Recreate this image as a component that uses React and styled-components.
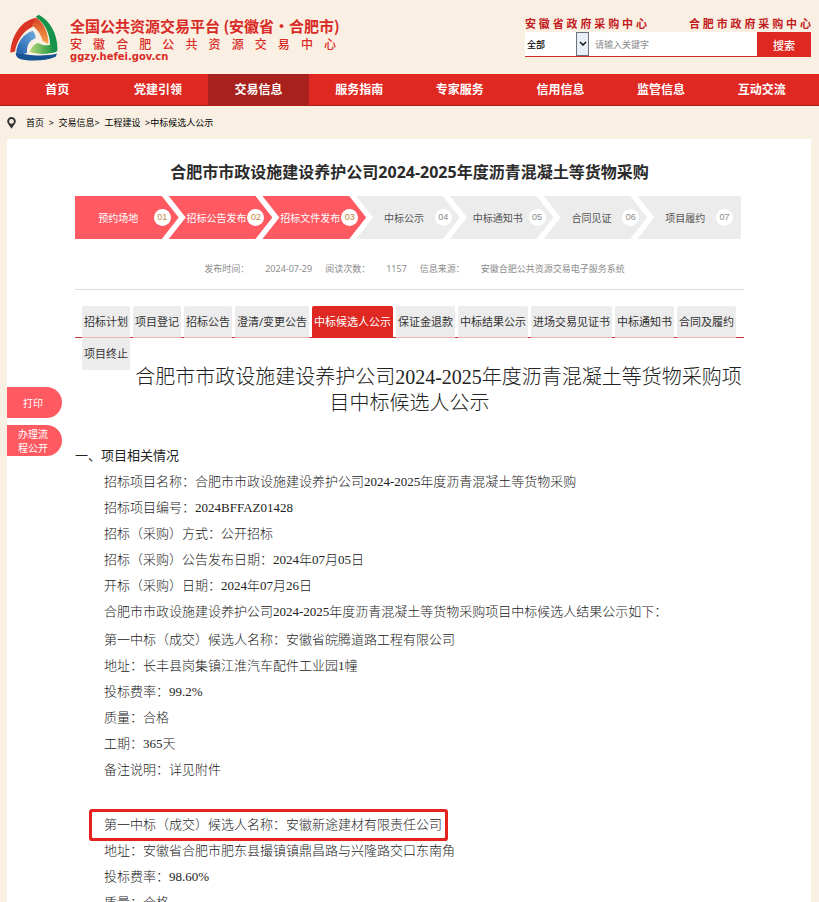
import React from "react";
import styled, { createGlobalStyle, css } from "styled-components";

const GlobalStyle = createGlobalStyle`
  * { box-sizing: border-box; }
  body {
    margin: 0;
    background: #f9f0e3;
    color: #333;
    font-family: "Noto Sans", "Noto Sans CJK SC", sans-serif;
    font-size: 12px;
  }
  h1, h2, h3, p, ul, ol, dl, dd { margin: 0; padding: 0; }
  ul, ol { list-style: none; }
  a { color: inherit; text-decoration: none; }
  button, input, select { font-family: inherit; margin: 0; }
`;

const Page = styled.div`
  height: 100vh;
  overflow: hidden;
  display: flex;
  flex-direction: column;
`;

const Header = styled.header`
  flex: none;
  height: 74px;
  padding: 14px 8px 0 10px;
  display: flex;
  justify-content: space-between;
  align-items: flex-start;
`;

const Brand = styled.a`
  display: flex;
  gap: 12px;
  color: #d92b26;
`;

const BrandText = styled.div`
  width: 266px;
  padding-top: 2px;
`;

const BrandName = styled.div`
  font: 700 15px/20px "Noto Sans CJK SC", sans-serif;
  white-space: nowrap;
`;

const BrandSub = styled.div`
  font: 500 12px/15px "Noto Sans CJK SC", sans-serif;
  text-align: justify;
  text-align-last: justify;
`;

const BrandUrl = styled.div`
  font: 700 10px/11px "DejaVu Sans", sans-serif;
`;

const Tools = styled.div`
  width: 286px;
  margin-top: 1px;
`;

const Centers = styled.div`
  display: flex;
  justify-content: space-between;
  height: 17px;
`;

const CenterLink = styled.a`
  width: 122px;
  color: #c4191c;
  font: 700 11px/17px "STXingkai", "KaiTi", "Noto Sans CJK SC", serif;
  text-align: justify;
  text-align-last: justify;
`;

const Search = styled.form`
  display: flex;
  height: 25px;
`;

const SelectWrap = styled.div`
  position: relative;
  flex: none;
  width: 64px;
  border-bottom: 1px solid #cf2b2b;
  background: #fff;
`;

const ScopeSelect = styled.select`
  appearance: none;
  width: 100%;
  height: 100%;
  padding: 0 0 0 2px;
  border: 0;
  background: transparent;
  color: #000;
  font-size: 9px;
  font-weight: 500;
`;

const SelectArrow = styled.span`
  position: absolute;
  top: 0;
  right: 0;
  bottom: 0;
  width: 13px;
  display: flex;
  align-items: center;
  justify-content: center;
  border: 1px solid #6a7580;
  background: #e9eff5;
  pointer-events: none;
`;

const SearchInput = styled.input`
  flex: 1;
  min-width: 0;
  padding: 0 6px;
  border: 0;
  border-bottom: 1px solid #cf2b2b;
  background: #fff;
  font-size: 9px;
  &::placeholder { color: #8a8a8a; }
`;

const SearchButton = styled.button`
  flex: none;
  width: 54px;
  padding: 0;
  border: 0;
  background: #e02822;
  color: #fff;
  font-size: 11px;
  font-weight: 500;
`;

const Nav = styled.nav`
  flex: none;
  display: flex;
  height: 32px;
  padding: 0 7px;
  background: #e02822;
  border-bottom: 1px solid #ae1d1b;
`;

const NavItem = styled.a`
  flex: 1;
  text-align: center;
  color: #fff;
  font-weight: 700;
  font-size: 12px;
  line-height: 31px;
  background: ${(p) => (p.$active ? "#a9211c" : "transparent")};
`;

const Crumbs = styled.nav`
  flex: none;
  display: flex;
  align-items: center;
  gap: 10px;
  height: 33px;
  padding: 0 7px;
  color: #000;
  font-size: 9px;
  white-space: pre;
`;

const Panel = styled.main`
  position: relative;
  flex: 1 0 auto;
  margin: 0 8px 0 7px;
  padding: 20px 67px 0 68px;
  background: #fff;
`;

const Title = styled.h1`
  color: #2b2b2b;
  font-size: 16px;
  font-weight: 700;
  line-height: 26px;
  text-align: center;
`;

const Steps = styled.ol`
  display: grid;
  grid-template-columns: repeat(7, minmax(0, 1fr));
  margin: 11px 3px 0 0;
  padding-right: 10px;
`;

const arrow = "calc(100% - 17px) 0, 100% 50%, calc(100% - 17px) 100%";

const Step = styled.li`
  height: 43px;
  margin-right: -10px;
  padding: 0 8px 0 17px;
  display: flex;
  align-items: center;
  font-size: 10px;
  white-space: nowrap;
  color: ${(p) => (p.$done ? "#fff" : "#555")};
  background: ${(p) => (p.$done ? "#ff5962" : "#ececec")};
  clip-path: polygon(0 0, ${arrow}, 0 100%, 17px 50%);
  &:first-child {
    padding-left: 8px;
    clip-path: polygon(0 0, ${arrow}, 0 100%);
  }
  &:last-child {
    clip-path: polygon(0 0, 100% 0, 100% 100%, 0 100%, 17px 50%);
  }
`;

const StepName = styled.span`
  flex: 1;
  text-align: center;
`;

const StepNumber = styled.span`
  flex: none;
  width: 17px;
  height: 17px;
  border-radius: 50%;
  background: #fff;
  color: ${(p) => (p.$done ? "#c08a45" : "#8a8a8a")};
  font: 9px/17px "Liberation Sans", sans-serif;
  text-align: center;
`;

const Meta = styled.dl`
  display: flex;
  justify-content: center;
  gap: 13px;
  height: 51px;
  padding: 20px 0 0 10px;
  border-bottom: 1px solid #ddd;
  color: #8c8c8c;
  font-size: 9px;
  line-height: 20px;
`;

const MetaItem = styled.div`
  display: flex;
  gap: 16px;
`;

const Tabs = styled.ul`
  display: flex;
  flex-wrap: wrap;
  align-content: flex-start;
  gap: 0 3px;
  height: 32px;
  margin-top: 16px;
  padding-left: 7px;
  border-bottom: 1px solid #c2383b;
`;

const Tab = styled.a`
  display: block;
  height: 32px;
  padding: 0 2px;
  border-radius: 2px 2px 0 0;
  border-bottom: 1px solid #f0b4b4;
  background: #ececec;
  color: #333;
  font-size: 11px;
  line-height: 31px;
  ${(p) => p.$active && css`
    background: #e02822;
    border-color: #e02822;
    color: #fff;
  `}
  ${(p) => p.$wrapped && css`
    border-color: #ececec;
  `}
`;

const Article = styled.article`
  padding-top: 26px;
  color: #222;
  font-family: "Liberation Serif", "Noto Sans CJK SC", serif;
  font-weight: 300;
`;

const ArticleTitle = styled.h2`
  font-size: 20px;
  font-weight: 300;
  line-height: 26px;
  text-align: center;
  /* keeps the first line clear of the wrapped tab */
  &::before {
    content: "";
    float: left;
    width: 58px;
    height: 8px;
  }
`;

const SectionTitle = styled.h3`
  margin: 26px 0 1px;
  font: 400 13px/26px "Noto Sans", "Noto Sans CJK SC", sans-serif;
`;

const Lines = styled.div`
  padding-left: 29px;
  font-size: 13px;
  line-height: 26px;
  margin-bottom: ${(p) => (p.$spaced ? 29 : 2)}px;
`;

const Highlight = styled.p`
  width: fit-content;
  margin-left: -12px;
  padding: 0 3px 0 12px;
  border-radius: 1px;
  box-shadow: 0 0 0 3px #e4231f;
`;

const SideActions = styled.aside`
  position: absolute;
  left: 0;
  top: 248px;
  display: grid;
  gap: 7px;
`;

const SideButton = styled.button`
  width: 55px;
  height: 31px;
  padding: 0 12px 0 9px;
  border: 0;
  border-radius: 0 16px 16px 0;
  background: #ff5962;
  color: #fff;
  font-size: 10px;
  line-height: 14px;
`;

function Logo() {
  return (
    <svg width="48" height="48" viewBox="14 18 146 142" aria-hidden="true">
      <defs>
        <linearGradient id="warm" x1="0" y1="0" x2="0" y2="1">
          <stop offset="0" stopColor="#d94724" />
          <stop offset="1" stopColor="#f3a54f" />
        </linearGradient>
        <linearGradient id="cool" x1="1" y1="0" x2="0" y2="1">
          <stop offset="0" stopColor="#72aee0" />
          <stop offset="1" stopColor="#1b5caa" />
        </linearGradient>
        <linearGradient id="leaf" x1="0" y1="0" x2="1" y2="0">
          <stop offset="0" stopColor="#b8d879" />
          <stop offset="1" stopColor="#239944" />
        </linearGradient>
      </defs>
      <path fill="#db3425" d="M94 28C55 31 19 75 15 134L29 130C34 98 55 66 85 53L101 33Z" />
      <path fill="url(#warm)" d="M80 50L96 29C118 46 131 74 131 107L113 97C109 80 98 62 80 50Z" />
      <path fill="#16934a" d="M92 24L102 18C138 38 161 82 158 128C152 134 143 135 134 134C142 92 127 48 92 24Z" />
      <path fill="url(#leaf)" d="M74 131C79 116 88 107 99 104C116 113 130 113 142 107L142 134C117 140 92 138 74 131Z" />
      <path fill="url(#cool)" d="M33 132C36 101 56 76 83 67C90 74 92 82 92 90C73 96 64 112 66 134L52 139Z" />
      <path fill="#175293" d="M32 132C61 141 115 147 157 136L153 146C125 158 86 160 55 155C42 153 30 147 32 132Z" />
    </svg>
  );
}

const PinIcon = () => (
  <svg width="9" height="12" viewBox="0 0 9 12" aria-hidden="true">
    <path fill="#333" fillRule="evenodd" d="M4.500 0A4.300 4.300 0 0 0 .2 4.300C.2 6.500 2.500 8.500 4.500 11.700C6.500 8.500 8.800 6.500 8.800 4.300A4.300 4.300 0 0 0 4.500 0ZM4.500 2A2.400 2.400 0 1 1 4.500 6.800A2.400 2.400 0 1 1 4.500 2Z" />
  </svg>
);

const NAV = ["首页", "党建引领", "交易信息", "服务指南", "专家服务", "信用信息", "监管信息", "互动交流"];
const STEPS = ["预约场地", "招标公告发布", "招标文件发布", "中标公示", "中标通知书", "合同见证", "项目履约"];
const TABS = [
  "招标计划", "项目登记", "招标公告", "澄清/变更公告", "中标候选人公示", "保证金退款",
  "中标结果公示", "进场交易见证书", "中标通知书", "合同及履约", "项目终止",
];
const META = [
  ["发布时间：", "2024-07-29"],
  ["阅读次数：", "1157"],
  ["信息来源：", "安徽合肥公共资源交易电子服务系统"],
];
const PROJECT = [
  "招标项目名称：合肥市市政设施建设养护公司2024-2025年度沥青混凝土等货物采购",
  "招标项目编号：2024BFFAZ01428",
  "招标（采购）方式：公开招标",
  "招标（采购）公告发布日期：2024年07月05日",
  "开标（采购）日期：2024年07月26日",
  "合肥市市政设施建设养护公司2024-2025年度沥青混凝土等货物采购项目中标候选人结果公示如下：",
];
const FIRST = [
  "第一中标（成交）候选人名称：安徽省皖腾道路工程有限公司",
  "地址：长丰县岗集镇江淮汽车配件工业园1幢",
  "投标费率：99.2%",
  "质量：合格",
  "工期：365天",
  "备注说明：详见附件",
];
const SECOND = [
  "地址：安徽省合肥市肥东县撮镇镇鼎昌路与兴隆路交口东南角",
  "投标费率：98.60%",
  "质量：合格",
];

export default function App() {
  return (
    <Page lang="zh-CN">
      <GlobalStyle />
      <Header>
        <Brand href="#">
          <Logo />
          <BrandText>
            <BrandName>全国公共资源交易平台 (安徽省·合肥市)</BrandName>
            <BrandSub>安徽合肥公共资源交易中心</BrandSub>
            <BrandUrl>ggzy.hefei.gov.cn</BrandUrl>
          </BrandText>
        </Brand>
        <Tools>
          <Centers>
            <CenterLink href="#">安徽省政府采购中心</CenterLink>
            <CenterLink href="#">合肥市政府采购中心</CenterLink>
          </Centers>
          <Search onSubmit={(e) => e.preventDefault()}>
            <SelectWrap>
              <ScopeSelect aria-label="搜索范围">
                <option>全部</option>
              </ScopeSelect>
              <SelectArrow>
                <svg width="8" height="6" viewBox="0 0 8 6" aria-hidden="true">
                  <path d="M1 1L4 4L7 1" fill="none" stroke="#111" strokeWidth="1.500" />
                </svg>
              </SelectArrow>
            </SelectWrap>
            <SearchInput aria-label="关键字" placeholder="请输入关键字" />
            <SearchButton type="submit">搜索</SearchButton>
          </Search>
        </Tools>
      </Header>
      <Nav>
        {NAV.map((name) => (
          <NavItem key={name} href="#" $active={name === "交易信息"}>{name}</NavItem>
        ))}
      </Nav>
      <Crumbs aria-label="当前位置">
        <PinIcon />
        <span>
          <a href="#">首页</a>{"  >  "}<a href="#">交易信息</a>{">  "}
          <a href="#">工程建设</a>{"  >"}<a href="#">中标候选人公示</a>
        </span>
      </Crumbs>
      <Panel>
        <Title>合肥市市政设施建设养护公司2024-2025年度沥青混凝土等货物采购</Title>
        <Steps>
          {STEPS.map((name, i) => (
            <Step key={name} $done={i < 3}>
              <StepName>{name}</StepName>
              <StepNumber $done={i < 3}>{`0${i + 1}`}</StepNumber>
            </Step>
          ))}
        </Steps>
        <Meta>
          {META.map(([label, value]) => (
            <MetaItem key={label}>
              <dt>{label}</dt>
              <dd>{value}</dd>
            </MetaItem>
          ))}
        </Meta>
        <Tabs>
          {TABS.map((name) => (
            <li key={name}>
              <Tab href="#" $active={name === "中标候选人公示"} $wrapped={name === "项目终止"}>{name}</Tab>
            </li>
          ))}
        </Tabs>
        <Article>
          <ArticleTitle>合肥市市政设施建设养护公司2024-2025年度沥青混凝土等货物采购项目中标候选人公示</ArticleTitle>
          <SectionTitle>一、项目相关情况</SectionTitle>
          <Lines>{PROJECT.map((t) => <p key={t}>{t}</p>)}</Lines>
          <Lines $spaced>{FIRST.map((t) => <p key={t}>{t}</p>)}</Lines>
          <Lines>
            <Highlight>第一中标（成交）候选人名称：安徽新途建材有限责任公司</Highlight>
            {SECOND.map((t) => <p key={t}>{t}</p>)}
          </Lines>
        </Article>
        <SideActions>
          <SideButton type="button">打印</SideButton>
          <SideButton type="button">办理流程公开</SideButton>
        </SideActions>
      </Panel>
    </Page>
  );
}
